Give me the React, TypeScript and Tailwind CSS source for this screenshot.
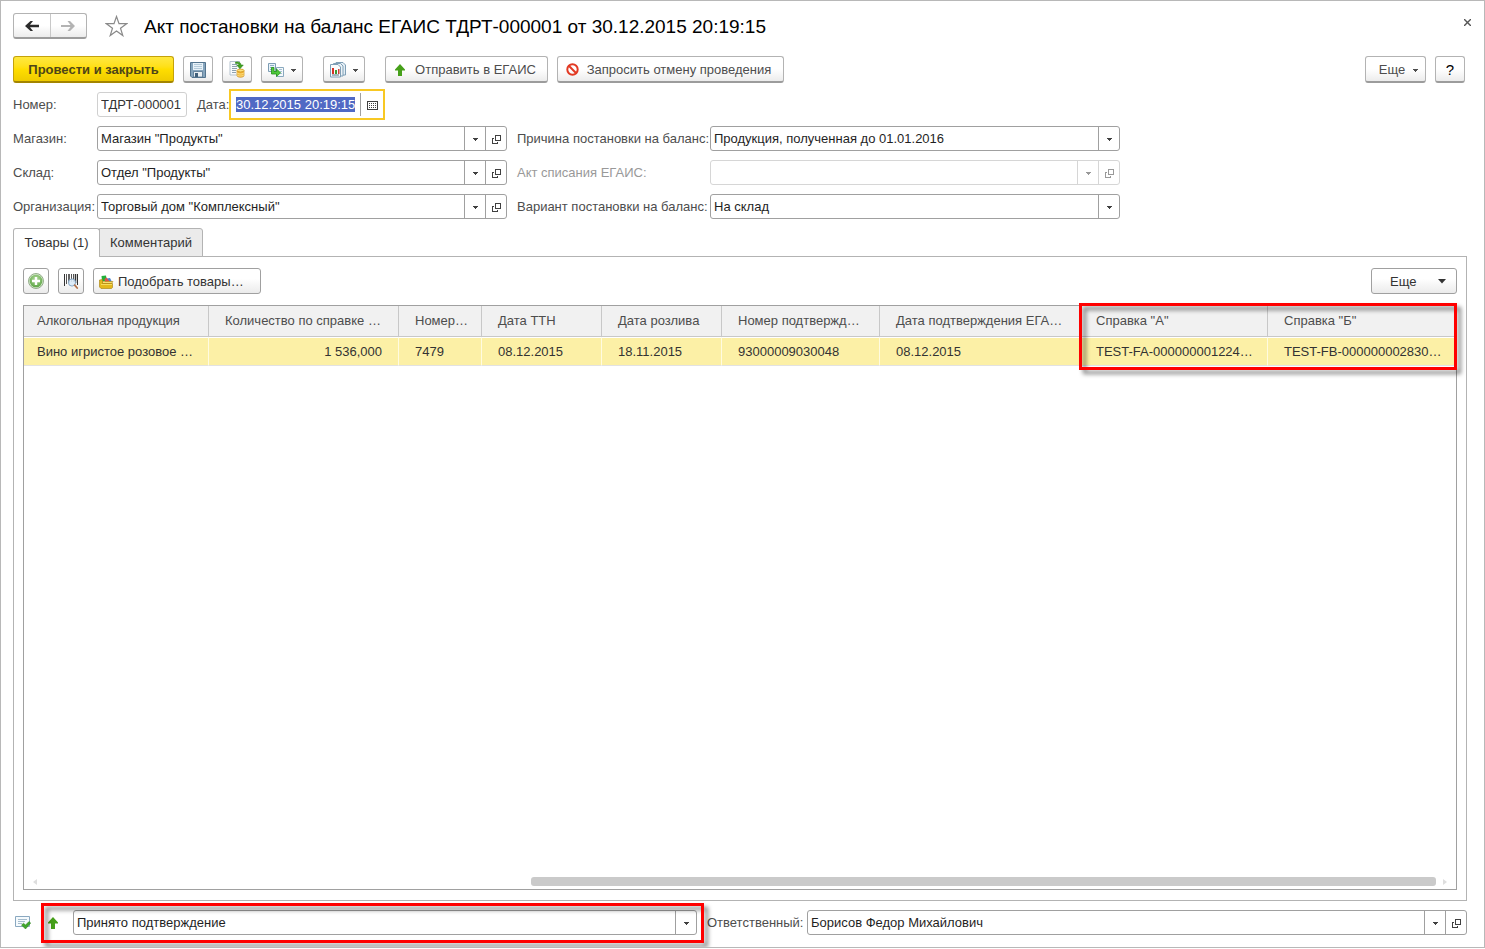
import { useEffect, useRef, type ReactNode } from "react";

const raised =
  "flex h-[27px] shrink-0 items-center justify-center rounded-[3px] border border-b-2 border-[#b3b3b3] border-b-[#9c9c9c] bg-gradient-to-b from-white from-50% to-[#ececec] pt-px text-[#4d4d4d]";
const flat =
  "flex h-[26px] shrink-0 items-center rounded-[3px] border border-[#a0a0a0] bg-gradient-to-b from-white from-40% to-[#ebebeb] text-[#333]";

function Caret({ className = "" }: { className?: string }) {
  return (
    <svg className={className} width="5" height="3" viewBox="0 0 5 3" fill="currentColor" shapeRendering="crispEdges" aria-hidden="true">
      <path d="M0 0h5v1H0zM1 1h3v1H1zM2 2h1v1H2z" />
    </svg>
  );
}

function OpenIcon() {
  return (
    <svg width="9" height="9" viewBox="0 0 9 9" fill="currentColor" shapeRendering="crispEdges" aria-hidden="true">
      <path fillRule="evenodd" d="M3 0h6v6H3zM4 1v4h4V1z" />
      <path d="M0 3h2v1H1v4h4V7h1v2H0z" />
    </svg>
  );
}

function GreenUp() {
  return (
    <svg width="10" height="12" viewBox="0 0 10 12" aria-hidden="true">
      <path d="M5 0l5 5.400v1H7V12H3V6.400H0v-1z" fill="#46a01a" />
    </svg>
  );
}

function SaveIcon() {
  return (
    <svg width="16" height="16" viewBox="0 0 16 16" aria-hidden="true">
      <path d="M.5 .5h15v15H2L.5 14z" fill="#86a5bd" stroke="#54758f" />
      <path d="M3 1h10v7H3z" fill="#e8f2f8" />
      <path d="M4 2.500h8M4 4.500h8M4 6.500h8" stroke="#b4cad9" />
      <path d="M3.500 9.500h9v5.500h-9z" fill="#e8eef2" stroke="#54758f" strokeWidth=".8" />
      <path d="M5 11h3v4H5z" fill="#41607a" />
    </svg>
  );
}

function PostIcon() {
  return (
    <svg width="16" height="17" viewBox="0 0 16 17" aria-hidden="true">
      <path d="M1 .5h9.500V14H1z" fill="#f7fafc" stroke="#b4c3cf" />
      <path d="M3 3.500h5M3 5.500h5M3 7.500h5M3 9.500h4M3 11.500h4" stroke="#8fa2b1" />
      <path d="M6.500 1c3.500-.5 5.500.5 5.500 3h2.300L11 7.800 7.700 4H10c0-1.300-1-1.800-3.500-1.500z" fill="#3fa321" stroke="#267a12" strokeWidth=".5" />
      <path d="M8 9.500v5c0 2.300 7 2.300 7 0v-5z" fill="#f2b22d" stroke="#c98a18" strokeWidth=".7" />
      <ellipse cx="11.500" cy="9.500" rx="3.500" ry="1.400" fill="#ffe27a" stroke="#c98a18" strokeWidth=".7" />
      <path d="M8 11.500c0 2 7 2 7 0M8 13.500c0 2 7 2 7 0" fill="none" stroke="#fff0a8" strokeWidth=".8" />
    </svg>
  );
}

function BasedOnIcon() {
  return (
    <svg width="16" height="14" viewBox="0 0 16 14" aria-hidden="true">
      <path d="M.5.5h7v8h-7z" fill="#eaf3f9" stroke="#7d9db4" />
      <path d="M2 2.500h4M2 4.500h3M2 6.500h2" stroke="#8fb0c6" />
      <path d="M8.500 4.500h7v9h-7z" fill="#f6fafc" stroke="#8aa9bf" />
      <path d="M11 6.500h3M12 8.500h2M12 10.500h2" stroke="#a8c1d2" />
      <path d="M3.500 4.500H6V8.500h2.500V6l4 3.800-4 3.700V11H3.500z" fill="#4fc83a" stroke="#238f17" strokeWidth=".8" />
    </svg>
  );
}

function ReportIcon() {
  return (
    <svg width="17" height="16" viewBox="0 0 17 16" aria-hidden="true">
      <path d="M6 .5h7l2.500 2.500v10H6z" fill="#e4eef5" stroke="#7f9fb6" />
      <path d="M3.500 1.500h7l2.500 2.500v10H3.500z" fill="#edf4f8" stroke="#7f9fb6" />
      <path d="M.5 2.500H8l2.500 2.500v10H.5z" fill="#fafcfd" stroke="#7f9fb6" />
      <path d="M2 6h2v6H2z" fill="#d93025" />
      <path d="M5 8h2v4H5z" fill="#3c9b33" />
      <path d="M8 7h1.500v5H8z" fill="#cf3f35" />
      <path d="M2 13h7" stroke="#54707f" />
    </svg>
  );
}

function AddIcon() {
  return (
    <svg width="16" height="16" viewBox="0 0 16 16" aria-hidden="true">
      <defs>
        <radialGradient id="add" cx=".5" cy=".35" r=".65">
          <stop offset="0" stopColor="#b3dc9c" />
          <stop offset="1" stopColor="#5ea547" />
        </radialGradient>
      </defs>
      <circle cx="8" cy="8" r="7.500" fill="#d5e8cc" stroke="#7f9c74" strokeWidth=".8" />
      <circle cx="8" cy="8" r="6.300" fill="url(#add)" />
      <path d="M8 4v8M4 8h8" stroke="#fff" strokeWidth="2.400" />
    </svg>
  );
}

function BarcodeIcon() {
  return (
    <svg width="16" height="16" viewBox="0 0 16 16" aria-hidden="true">
      <path d="M1.500 1v12M14.500 1v11" stroke="#333" />
      <path d="M3.500 1v10M8.500 1v8M10.500 1v8" stroke="#555" />
      <path d="M6 1v9M12.500 1v9" stroke="#333" strokeWidth="1.500" />
      <circle cx="9" cy="9.500" r="3.600" fill="#dcebf8" fillOpacity=".9" stroke="#86a8c8" />
      <path d="M11.700 12.200l2.500 2.800" stroke="#b5744c" strokeWidth="1.800" strokeLinecap="round" />
    </svg>
  );
}

function PickIcon() {
  return (
    <svg width="15" height="14" viewBox="0 0 15 14" aria-hidden="true">
      <path d="M2.500 1l4.500-.5L8 6H3z" fill="#22b03a" />
      <path d="M8 3.500l3-.5 2 4H8z" fill="#4a86cf" />
      <path d="M5.500 4l2-1.500L11 7H6z" fill="#e0524a" />
      <path d="M3.500 6.500H14l-1.500 2H2z" fill="#f7df70" stroke="#b48a10" strokeWidth=".6" />
      <path d="M.5 5l3-.5v4H13.500v4L12.500 13.500H2L.5 12z" fill="#e4b81c" stroke="#a57d08" strokeWidth=".6" />
      <path d="M2 9.500h11" stroke="#f7dc5c" />
    </svg>
  );
}

function StatusIcon() {
  return (
    <svg width="16" height="14" viewBox="0 0 16 14" aria-hidden="true">
      <path d="M.5.5h14v10H.5z" fill="#f5fafd" stroke="#8aa8c0" />
      <path d="M3 3.500h9M3 5.500h7M3 7.500h4" stroke="#a5bccd" />
      <path d="M6.500 9l2-1.800 2 1.800L14 5.500 15.700 7l-5.200 6z" fill="#3fa72b" stroke="#257a16" strokeWidth=".5" />
    </svg>
  );
}

function Combo({ id, value, label, open, disabled }: { id: string; value: string; label?: string; open?: boolean; disabled?: boolean }) {
  const line = disabled ? "border-[#d6d6d6]" : "border-[#a0a0a0]";
  const ink = disabled ? "text-[#999]" : "text-[#404040]";
  return (
    <div className={`flex h-[25px] min-w-0 flex-1 rounded-[3px] border bg-white ${line}`}>
      <div className="grid min-w-0 flex-1">
        <select
          id={id}
          aria-label={label}
          disabled={disabled}
          defaultValue={value}
          className="col-start-1 row-start-1 h-[23px] w-full appearance-none bg-transparent pr-6 pl-[3px] text-[#1f1f1f] outline-none"
        >
          <option>{value}</option>
        </select>
        <span className={`pointer-events-none col-start-1 row-start-1 flex w-[21px] items-center justify-center justify-self-end border-l pt-0.5 ${line} ${ink}`}>
          <Caret />
        </span>
      </div>
      {open && (
        <button type="button" aria-label="Открыть" disabled={disabled} className={`flex w-[21px] items-center justify-center border-l pt-px ${line} ${ink}`}>
          <OpenIcon />
        </button>
      )}
    </div>
  );
}

function Label({ htmlFor, children, muted }: { htmlFor: string; children: ReactNode; muted?: boolean }) {
  return (
    <label htmlFor={htmlFor} className={`whitespace-nowrap ${muted ? "text-[#999]" : "text-[#4d4d4d]"}`}>
      {children}
    </label>
  );
}

const columns = [
  { title: "Алкогольная продукция", value: "Вино игристое розовое …", width: "w-[185px]" },
  { title: "Количество по справке …", value: "1 536,000", width: "w-[190px]", right: true },
  { title: "Номер…", value: "7479", width: "w-[83px]" },
  { title: "Дата ТТН", value: "08.12.2015", width: "w-[120px]" },
  { title: "Дата розлива", value: "18.11.2015", width: "w-[120px]" },
  { title: "Номер подтвержд…", value: "93000009030048", width: "w-[158px]" },
  { title: "Дата подтверждения ЕГА…", value: "08.12.2015", width: "w-[200px]" },
  { title: 'Справка "А"', value: "TEST-FA-000000001224…", width: "w-[188px]" },
  { title: 'Справка "Б"', value: "TEST-FB-000000002830…", width: "" },
];

export default function App() {
  const dateRef = useRef<HTMLInputElement>(null);
  useEffect(() => {
    dateRef.current?.focus();
    dateRef.current?.select();
  }, []);

  return (
    <div className="h-screen bg-white pb-px font-['Liberation_Sans',Arial,sans-serif] text-[13px] leading-4">
      <main className="flex h-full flex-col overflow-hidden border border-[#b8b8b8] pt-3 pr-[17px] pb-3 pl-3">
        <header className="flex h-[26px] items-center">
          <div className="flex h-[26px] w-[74px] shrink-0 rounded-[3px] border border-b-2 border-[#b3b3b3] border-b-[#9c9c9c] bg-gradient-to-b from-white from-50% to-[#ececec]">
            <button type="button" aria-label="Назад" className="flex flex-1 items-center justify-center text-[#2b2b2b]">
              <svg width="14" height="12" viewBox="0 0 14 12" aria-hidden="true">
                <path d="M14 4.800H5L8 1H5.500L0 6l5.500 5H8L5 7.200h9z" fill="currentColor" />
              </svg>
            </button>
            <button type="button" aria-label="Вперед" className="flex flex-1 items-center justify-center border-l border-[#c8c8c8] text-[#b3b3b3]">
              <svg width="14" height="12" viewBox="0 0 14 12" aria-hidden="true">
                <path d="M0 5h9.500L6.500 1H9l5 5-5 5H6.500l3-4H0z" fill="currentColor" />
              </svg>
            </button>
          </div>
          <button type="button" aria-label="В избранное" className="ml-[18px] shrink-0">
            <svg width="23" height="22" viewBox="0 0 23 22" fill="none" stroke="#8a8a8a" strokeWidth="1.200" aria-hidden="true">
              <path d="M11.500 1.500l2.500 7.200h7.600l-6.100 4.600 2.300 7.300-6.300-4.500-6.300 4.500 2.300-7.300L1.400 8.700H9z" />
            </svg>
          </button>
          <h1 className="ml-4 flex-1 truncate pt-0.5 text-[19px] leading-6 text-black">
            Акт постановки на баланс ЕГАИС ТДРТ-000001 от 30.12.2015 20:19:15
          </h1>
          <button type="button" aria-label="Закрыть" className="-mr-2 mb-2 flex h-4 w-4 items-center justify-center">
            <svg width="7" height="7" viewBox="0 0 7 7" stroke="#555" strokeWidth="1.400" aria-hidden="true">
              <path d="M0 0l7 7M7 0L0 7" />
            </svg>
          </button>
        </header>

        <div className="mt-[17px] flex h-[27px] shrink-0 pr-0.5">
          <button
            type="button"
            className="h-[27px] w-[161px] shrink-0 rounded-[3px] border border-b-2 border-[#c4a20a] border-b-[#a38500] bg-gradient-to-b from-[#ffe83d] via-[#ffde00] to-[#efcb00] pt-px font-bold text-[#4d4519]"
          >
            Провести и закрыть
          </button>
          <button type="button" aria-label="Записать" className={`${raised} ml-[9px] w-[30px]`}><SaveIcon /></button>
          <button type="button" aria-label="Провести" className={`${raised} ml-[9px] w-[30px]`}><PostIcon /></button>
          <button type="button" aria-label="Создать на основании" className={`${raised} ml-[9px] w-[42px] gap-[7px]`}><BasedOnIcon /><Caret className="mt-0.5" /></button>
          <button type="button" aria-label="Отчеты" className={`${raised} ml-5 w-[42px] gap-[6px]`}><ReportIcon /><Caret className="mt-0.5" /></button>
          <button type="button" className={`${raised} ml-5 w-[163px] gap-[10px] pr-0.5`}><GreenUp />Отправить в ЕГАИС</button>
          <button type="button" className={`${raised} ml-[9px] w-[227px] gap-2 pr-1`}>
            <svg width="13" height="13" viewBox="0 0 13 13" fill="none" stroke="#e23a24" strokeWidth="2" aria-hidden="true">
              <circle cx="6.500" cy="6.500" r="5.200" />
              <path d="M2.800 2.800l7.400 7.400" />
            </svg>
            Запросить отмену проведения
          </button>
          <button type="button" className={`${raised} ml-auto w-[61px] gap-2 pl-[6px]`}>Еще<Caret className="mt-0.5" /></button>
          <button type="button" aria-label="Справка" className={`${raised} ml-[9px] w-[30px] text-[15px] text-black`}>?</button>
        </div>

        <div className="mt-[6px] flex h-[31px] shrink-0 items-center">
          <div className="w-[84px]"><Label htmlFor="number">Номер:</Label></div>
          <input id="number" defaultValue="ТДРТ-000001" className="h-[25px] w-[90px] rounded-[3px] border border-[#d0d0d0] px-[3px] text-[#333] outline-none" />
          <div className="ml-[10px] w-8"><Label htmlFor="date">Дата:</Label></div>
          <div className="flex h-[31px] w-[156px] items-center border-2 border-[#f8c823]">
            <input
              id="date"
              ref={dateRef}
              defaultValue="30.12.2015 20:19:15"
              className="h-[23px] min-w-0 flex-1 pl-[5px] text-[#1f1f1f] outline-none selection:bg-[#5069c4] selection:text-white"
            />
            <button type="button" aria-label="Выбрать дату" className="flex h-[23px] w-[23px] items-center justify-center border-l border-[#a0a0a0] pt-0.5 text-[#404040]">
              <svg width="11" height="9" viewBox="0 0 11 9" fill="none" stroke="currentColor" shapeRendering="crispEdges" aria-hidden="true">
                <path d="M.5.5h10v8H.5z" />
                <path d="M2 2.500h7M2 4.500h7M2 6.500h7" strokeDasharray="1 1" />
              </svg>
            </button>
          </div>
        </div>

        <div className="mt-[6px] grid shrink-0 grid-cols-[84px_minmax(0,410px)_203px_minmax(0,410px)] items-center gap-y-[9px]">
          <Label htmlFor="shop">Магазин:</Label>
          <Combo id="shop" value='Магазин "Продукты"' open />
          <div className="pl-[10px]"><Label htmlFor="reason">Причина постановки на баланс:</Label></div>
          <Combo id="reason" value="Продукция, полученная до 01.01.2016" />
          <Label htmlFor="store">Склад:</Label>
          <Combo id="store" value='Отдел "Продукты"' open />
          <div className="pl-[10px]"><Label htmlFor="act" muted>Акт списания ЕГАИС:</Label></div>
          <Combo id="act" value="" open disabled />
          <Label htmlFor="org">Организация:</Label>
          <Combo id="org" value='Торговый дом "Комплексный"' open />
          <div className="pl-[10px]"><Label htmlFor="variant">Вариант постановки на баланс:</Label></div>
          <Combo id="variant" value="На склад" />
        </div>

        <div role="tablist" className="z-10 mt-[9px] -mb-px flex h-[29px] shrink-0 text-[#333]">
          <button type="button" role="tab" aria-selected="true" className="w-[87px] rounded-t-[3px] border border-b-0 border-[#b3b3b3] bg-white">Товары (1)</button>
          <button type="button" role="tab" aria-selected="false" className="-ml-px w-[104px] rounded-tr-[3px] border border-[#b3b3b3] bg-[#ebebeb]">Комментарий</button>
        </div>

        <section className="flex min-h-0 flex-1 flex-col border border-[#b3b3b3] px-[9px] pt-[11px] pb-[10px]">
          <div className="flex shrink-0">
            <button type="button" aria-label="Добавить" className={`${flat} w-[26px] justify-center`}><AddIcon /></button>
            <button type="button" aria-label="Поиск по штрихкоду" className={`${flat} ml-[9px] w-[26px] justify-center`}><BarcodeIcon /></button>
            <button type="button" className={`${flat} ml-[9px] w-[168px] gap-1 pt-px pl-[5px]`}><PickIcon />Подобрать товары…</button>
            <button type="button" className={`${flat} ml-auto w-[86px] justify-between pt-px pr-[10px] pl-[18px]`}>
              Еще
              <svg width="8" height="5" viewBox="0 0 8 5" fill="currentColor" aria-hidden="true"><path d="M0 0h8L4 4.500z" /></svg>
            </button>
          </div>

          <div className="relative mt-[11px] flex min-h-0 flex-1 flex-col border border-[#a0a0a0]">
            <table className="w-full table-fixed border-separate border-spacing-0 text-left">
              <thead>
                <tr>
                  {columns.map((c) => (
                    <th
                      key={c.title}
                      className={`h-[31px] truncate border-r border-b border-[#c8c8c8] bg-[#f1f1f1] pr-2 pl-4 font-normal text-[#4d4d4d] first:pl-[13px] last:border-r-0 ${c.width}`}
                    >
                      {c.title}
                    </th>
                  ))}
                </tr>
              </thead>
              <tbody>
                <tr>
                  {columns.map((c) => (
                    <td
                      key={c.title}
                      className={`h-[29px] truncate border-t border-r border-b border-t-white border-r-[#fffbe0] border-b-[#e2e2e2] bg-[#fcf0a6] pl-4 text-[#333] first:pl-[13px] last:border-r-0 ${c.right ? "pr-4 text-right" : "pr-2"}`}
                    >
                      {c.value}
                    </td>
                  ))}
                </tr>
              </tbody>
            </table>
            <div className="mt-auto mb-[3px] flex h-[9px] items-center px-[9px] text-[#dedede]">
              <svg width="4" height="6" viewBox="0 0 4 6" fill="currentColor" aria-hidden="true"><path d="M4 0v6L0 3z" /></svg>
              <div className="mx-[7px] flex-1"><div className="ml-auto h-[9px] w-[65%] rounded-[3px] bg-[#cacaca]" /></div>
              <svg width="4" height="6" viewBox="0 0 4 6" fill="currentColor" aria-hidden="true"><path d="M0 0v6l4-3z" /></svg>
            </div>
            <div className="pointer-events-none absolute -top-[3px] -right-px h-[67px] w-[378px] border-3 border-[#f00] drop-shadow-[4px_4px_2px_rgba(0,0,0,0.5)]" />
          </div>
        </section>

        <footer className="mt-[9px] flex h-[25px] shrink-0 items-center">
          <div className="ml-[2px] flex w-[33px] shrink-0"><StatusIcon /></div>
          <div className="relative flex min-w-0 flex-[649] items-center">
            <span className="w-[25px] shrink-0"><GreenUp /></span>
            <Combo id="status" label="Статус ЕГАИС" value="Принято подтверждение" />
            <div className="pointer-events-none absolute -top-[7px] -right-[7px] -left-[7px] h-10 border-3 border-[#f00] drop-shadow-[4px_4px_2px_rgba(0,0,0,0.5)]" />
          </div>
          <div className="ml-[10px] w-[100px] shrink-0"><Label htmlFor="person">Ответственный:</Label></div>
          <div className="flex min-w-0 flex-[660]"><Combo id="person" value="Борисов Федор Михайлович" open /></div>
        </footer>
      </main>
    </div>
  );
}
